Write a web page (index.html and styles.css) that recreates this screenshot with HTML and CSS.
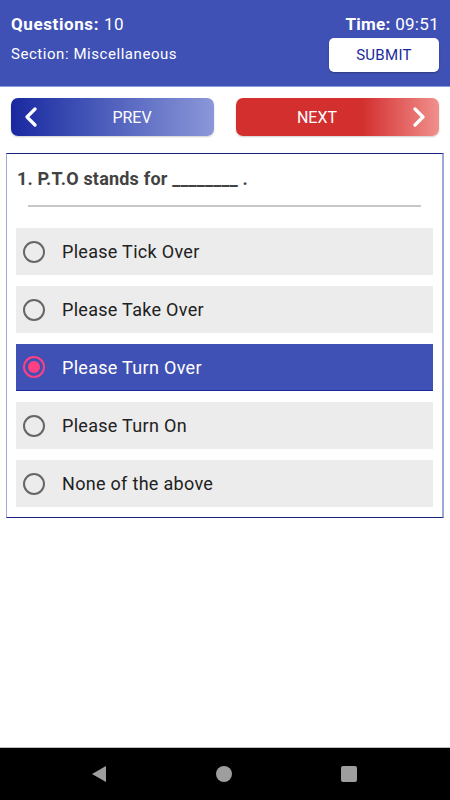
FILE: index.html
```html
<!DOCTYPE html>
<html>
<head>
<meta charset="utf-8">
<link rel="stylesheet" href="styles.css">
</head>
<body>
<div class="screen">
  <header class="top">
    <div class="top-left">
      <div class="q"><b>Questions:</b> 10</div>
      <div class="sec">Section: Miscellaneous</div>
    </div>
    <div class="top-right">
      <div class="time"><b>Time:</b> 09:51</div>
      <button class="submit">SUBMIT</button>
    </div>
  </header>
  <div class="navbtns">
    <div class="btn prev">
      <svg class="chev" width="14" height="20" viewBox="0 0 14 20"><path d="M11 2 L3 10 L11 18" fill="none" stroke="#fff" stroke-width="3.2" stroke-linecap="round" stroke-linejoin="round"/></svg>
      <span>PREV</span>
    </div>
    <div class="btn next">
      <span>NEXT</span>
      <svg class="chev" width="14" height="20" viewBox="0 0 14 20"><path d="M3 2 L11 10 L3 18" fill="none" stroke="#fff" stroke-width="3.2" stroke-linecap="round" stroke-linejoin="round"/></svg>
    </div>
  </div>
  <main class="card">
    <div class="question">1. P.T.O stands for ________ .</div>
    <div class="divider"></div>
    <div class="options">
      <div class="opt"><span class="radio"></span><span>Please Tick Over</span></div>
      <div class="opt"><span class="radio"></span><span>Please Take Over</span></div>
      <div class="opt sel"><span class="radio"></span><span>Please Turn Over</span></div>
      <div class="opt"><span class="radio"></span><span>Please Turn On</span></div>
      <div class="opt"><span class="radio"></span><span>None of the above</span></div>
    </div>
  </main>
  <div class="spacer"></div>
  <footer class="sysnav">
    <svg width="16" height="18" viewBox="0 0 16 18"><path d="M15 1 L1 9 L15 17 Z" fill="#9e9e9e"/></svg>
    <svg width="16" height="16" viewBox="0 0 16 16"><circle cx="8" cy="8" r="8" fill="#9e9e9e"/></svg>
    <svg width="16" height="16" viewBox="0 0 16 16"><rect x="0" y="0" width="16" height="16" rx="2" fill="#9e9e9e"/></svg>
  </footer>
</div>
</body>
</html>
```

FILE: styles.css
```css
* { box-sizing: border-box; }
html, body { margin: 0; padding: 0; }
body { font-family: Roboto, "Noto Sans", sans-serif; background: #fff; }
.screen { width: 450px; height: 800px; display: flex; flex-direction: column; }
.top {
  background: #3f51b5;
  height: 87px;
  border-bottom: 1px solid #8c9ee0;
  display: flex;
  justify-content: space-between;
  padding: 13px 11px 0 11px;
  color: #fff;
}
.q { font-size: 17px; line-height: 22px; letter-spacing: 0.6px; }
.q b, .time b { font-weight: 700; }
.sec { font-size: 15px; line-height: 20px; margin-top: 9px; letter-spacing: 0.55px; }
.top-right { display: flex; flex-direction: column; align-items: flex-end; }
.time { font-size: 17px; line-height: 22px; letter-spacing: 0.3px; }
.submit {
  margin-top: 3px;
  width: 110px; height: 34px;
  background: #fff; border: none; border-radius: 5px;
  color: #1a2a9a; font-family: Roboto, sans-serif; font-size: 15px;
  letter-spacing: 0.3px;
  box-shadow: 0 1px 2px rgba(0,0,0,0.3);
  padding: 0;
}
.navbtns { display: flex; justify-content: space-between; padding: 11px 11px 0 11px; }
.btn {
  width: 203px; height: 38px; border-radius: 7px;
  display: flex; align-items: center; position: relative;
  color: #fff; font-size: 16px;
  box-shadow: 0 1px 2px rgba(0,0,0,0.2);
}
.btn span { flex: 1; text-align: center; }
.prev { background: linear-gradient(90deg, #1a28a0 0%, #3f51b5 35%, #8b97d8 100%); padding-left: 13px; }
.prev span { padding-left: 12px; }
.next { background: linear-gradient(90deg, #d32f2f 0%, #d32f2f 62%, #f0908c 100%); padding-right: 13px; }
.next span { padding-right: 14px; }
.card {
  margin: 17px 6px 0 6px;
  height: 365px;
  border: 1px solid #9fa8da;
  border-top-color: #1a237e;
  border-bottom-color: #1a237e;
  border-right-width: 2px;
  padding: 0 9px 0 9px;
}
.question { font-size: 18px; font-weight: 700; color: #424242; padding: 14px 0 0 1px; line-height: 22px; letter-spacing: 0.2px; }
.divider { height: 2px; background: #c8c8c8; margin: 15px 12px 0 12px; }
.options { display: flex; flex-direction: column; gap: 11px; margin-top: 21px; }
.opt {
  height: 47px; background: #ececec;
  display: flex; align-items: center;
  font-size: 18px; color: #212121; letter-spacing: 0.3px;
}
.radio {
  width: 22px; height: 22px; border-radius: 50%;
  border: 2px solid #666; margin: 0 17px 0 7px;
  flex: none; position: relative;
}
.opt.sel { background: #3f51b5; color: #fff; border-bottom: 1px solid #1a2aa0; }
.opt.sel .radio { border-color: #ff4081; }
.opt.sel .radio::after {
  content: ""; position: absolute; left: 3px; top: 3px;
  width: 12px; height: 12px; border-radius: 50%; background: #ff4081;
}
.spacer { flex: 1; }
.sysnav {
  height: 53px; background: #000; border-top: 1px solid #bdbdbd;
  display: flex; align-items: center; justify-content: space-between;
  padding: 0 93px 0 91px;
}
```
